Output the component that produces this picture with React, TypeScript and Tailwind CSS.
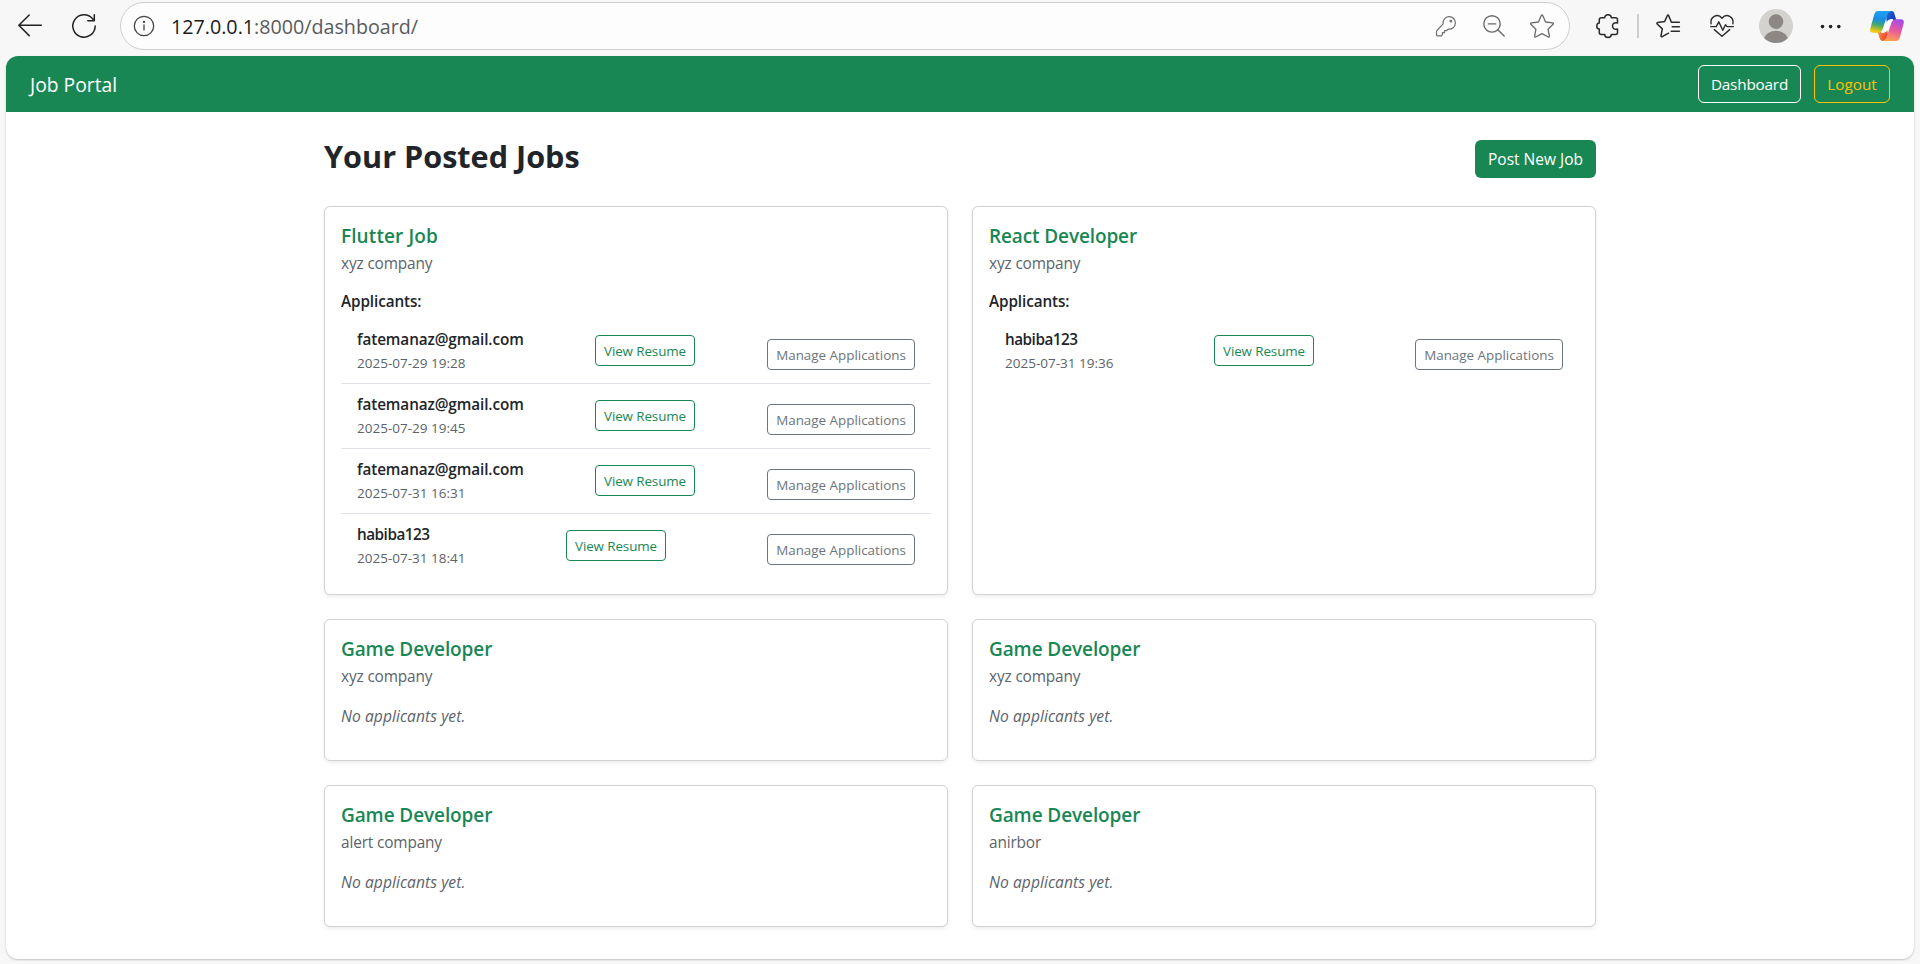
import React from "react";

type Applicant = { name: string; date: string; tracking: string };
type Job = { title: string; company: string; titleTracking: string; applicants: Applicant[] };

const EMAIL = "w-[166px] tracking-[-0.1px]";
const SHORT = "w-[108px] tracking-[-0.5px]";

const jobs: Job[] = [
  {
    title: "Flutter Job",
    company: "xyz company",
    titleTracking: "tracking-[0.1px]",
    applicants: [
      { name: "fatemanaz@gmail.com", date: "2025-07-29 19:28", tracking: EMAIL },
      { name: "fatemanaz@gmail.com", date: "2025-07-29 19:45", tracking: EMAIL },
      { name: "fatemanaz@gmail.com", date: "2025-07-31 16:31", tracking: EMAIL },
      { name: "habiba123", date: "2025-07-31 18:41", tracking: SHORT },
    ],
  },
  {
    title: "React Developer",
    company: "xyz company",
    titleTracking: "tracking-[-0.12px]",
    applicants: [{ name: "habiba123", date: "2025-07-31 19:36", tracking: SHORT }],
  },
  { title: "Game Developer", company: "xyz company", titleTracking: "tracking-[-0.1px]", applicants: [] },
  { title: "Game Developer", company: "xyz company", titleTracking: "tracking-[-0.1px]", applicants: [] },
  { title: "Game Developer", company: "alert company", titleTracking: "tracking-[-0.1px]", applicants: [] },
  { title: "Game Developer", company: "anirbor", titleTracking: "tracking-[-0.1px]", applicants: [] },
];

function Icon({ children, color = "#2b2b2b", width = 1.5, className = "" }: { children: React.ReactNode; color?: string; width?: number; className?: string }) {
  return (
    <svg
      viewBox="0 0 24 24"
      className={"size-6 shrink-0 overflow-visible " + className}
      fill="none"
      stroke={color}
      strokeWidth={width}
      strokeLinecap="round"
      strokeLinejoin="round"
    >
      {children}
    </svg>
  );
}

function Copilot() {
  return (
    <svg viewBox="0 0 102 90" className="ml-[27px] h-[30px] w-[34px] shrink-0">
      <defs>
        <linearGradient id="cpLeft" x1="0.5" y1="0" x2="0.3" y2="1">
          <stop offset="0" stopColor="#1fa2f2" />
          <stop offset="0.4" stopColor="#1b8be0" />
          <stop offset="0.65" stopColor="#45a96b" />
          <stop offset="0.95" stopColor="#f2c811" />
        </linearGradient>
        <linearGradient id="cpTop" x1="0" y1="0" x2="1" y2="0.6">
          <stop offset="0" stopColor="#1878e0" />
          <stop offset="1" stopColor="#1a2fb0" />
        </linearGradient>
        <linearGradient id="cpRight" x1="0.7" y1="0" x2="0.4" y2="1">
          <stop offset="0" stopColor="#a24be8" />
          <stop offset="0.5" stopColor="#e8589f" />
          <stop offset="1" stopColor="#ffa34a" />
        </linearGradient>
        <linearGradient id="cpBottom" x1="0" y1="0" x2="1" y2="0.4">
          <stop offset="0" stopColor="#f9a03a" />
          <stop offset="1" stopColor="#e6413c" />
        </linearGradient>
      </defs>
      <path d="M46 0h18c7 0 9 6 11 14l4 14H64c-8 0-11 5-13 12z" fill="url(#cpTop)" />
      <path d="M56 90H38c-7 0-9-6-11-14l-4-14h15c8 0 11-5 13-12z" fill="url(#cpBottom)" />
      <path d="M24 0h42c-9 1-13 9-16 18L38 54c-2 8-7 11-14 11H10C0 65-1 58 2 49l10-36C15 4 17 0 24 0z" fill="url(#cpLeft)" />
      <path d="M78 90H36c9-1 13-9 16-18l12-36c2-8 7-11 14-11h14c10 0 11 7 8 16L90 77c-3 9-5 13-12 13z" fill="url(#cpRight)" />
      <path d="M68 26c-10 0-15 3-18 11l-6 17c-2 6-5 9-9 10 10 0 15-3 18-11l6-17c2-6 5-9 9-10z" fill="#fff" stroke="#fff" strokeWidth="4" strokeLinejoin="round" />
    </svg>
  );
}

function BrowserBar() {
  return (
    <header className="flex h-14 items-center pb-1">
      <Icon className="ml-[18px]" color="#222">
        <path d="M23.3 11.3H.9M11.2 1 .8 11.3l10.400 10.300" />
      </Icon>
      <Icon className="ml-[30px]" color="#222">
        <path d="M23.200 12A11.200 11.200 0 1 1 20.600 4.800L22.300 6.600M22.300.700v6h-6.500" />
      </Icon>
      <div className="ml-6 flex h-12 w-[1450px] items-center rounded-full border border-[#cfcfcf] bg-[#fdfdfd] pr-[15px] pl-[11px]">
        <Icon color="#444" width={1.3}>
          <circle cx="12" cy="12" r="9.700" />
          <path d="M12 11v5" />
          <circle cx="12" cy="8" r="0.500" fill="#444" />
        </Icon>
        <span className="ml-[15px] pt-0.5 text-[19.7px] leading-7 text-[#5a5a5a]">
          <span className="text-[#1b1b1b]">127.0.0.1</span>:8000/dashboard/
        </span>
        <Icon className="ml-auto" color="#707070" width={1.2}>
          <path d="M9.100 9.800A6.200 6.200 0 1 1 14.300 15l-1.800 1.700h-2v2H8.400v1.900l-1 1.200H3.300c-.6 0-.8-.3-.8-.8v-3.400c0-.5.200-.8.500-1.100z" />
          <circle cx="16.900" cy="7.200" r="0.800" fill="#707070" />
        </Icon>
        <Icon className="ml-6" color="#6a6a6a" width={1.4}>
          <circle cx="10" cy="9.900" r="8.200" />
          <path d="M6.300 9.900h7.400M16 16l6.200 6.100" />
        </Icon>
        <Icon className="ml-6" color="#6a6a6a" width={1.3}>
          <path d="M11.300 1.600q.7-1.300 1.400 0l2.900 6.400 7 .9q1.400.300.500 1.400l-5 5 1.300 6.900q.1 1.300-1.100.8L12 19.600 5.700 23q-1.200.5-1.100-.8l1.300-6.900-5-5q-.9-1.100.5-1.400l7-.9z" />
        </Icon>
      </div>
      <Icon className="ml-[26px]">
        <path d="M5.300 3.700h3.400C8.700 2 10 .8 12 .8s3.300 1.200 3.300 2.900h4.200q2 0 2 2v3.200c-3.600-.8-5 1-5 3.100s1.400 3.900 5 3.100v3.400q0 2-2 2h-4.200c0 1.700-1.300 2.900-3.300 2.900s-3.300-1.200-3.300-2.900H5.300q-2 0-2-2v-3.400C1.700 15.100.8 13.900.8 12s.900-3.100 2.500-3.100V5.700q0-2 2-2z" />
      </Icon>
      <div className="ml-[17px] h-6 w-0.5 bg-[#cdcdcd]" />
      <Icon className="ml-[17px]">
        <path d="M12.600 19.200 6.200 22.700Q4.900 23.200 5 21.800L6.300 14.900 1.200 10Q.3 8.800 1.800 8.400L8.600 7.600 11.300 1.700Q12 .5 12.700 1.700L15.400 8.300H23.400M16.200 12.800H23.400M15.200 17.300H23.400" />
      </Icon>
      <Icon className="ml-[30px]" width={1.4}>
        <path d="M1.100 9.800C-.2 3.200 7.300-1.600 12 4.200 16.700-1.600 24.200 3.200 22.900 9.800M.6 12.600h5.600l2.600-4.700 4 8.400 2.700-5.500 1.600 1.800h6.300M4.300 15.600 12 22.200l7.700-6.600" />
      </Icon>
      <svg viewBox="0 0 34 34" className="ml-[25px] size-[34px] shrink-0">
        <circle cx="17" cy="17" r="17" fill="#d4d2ce" />
        <circle cx="17" cy="12.600" r="7.300" fill="#8b8784" />
        <path d="M5.200 29.200C7 24.600 11.500 21.800 17 21.800s10 2.800 11.800 7.400A17 17 0 0 1 5.200 29.200z" fill="#8b8784" />
      </svg>
      <svg viewBox="0 0 24 24" className="ml-[26px] size-6 shrink-0" fill="#222">
        <circle cx="3.500" cy="12.600" r="1.800" />
        <circle cx="11.600" cy="12.600" r="1.800" />
        <circle cx="19.800" cy="12.600" r="1.800" />
      </svg>
      <Copilot />
    </header>
  );
}

function ApplicantRow({ applicant }: { applicant: Applicant }) {
  return (
    <li className="flex items-start justify-between border-b border-[#dee2e6] px-4 py-2 last:border-b-0">
      <div className={"h-12 whitespace-nowrap " + applicant.tracking}>
        <div className="text-[15.3px] leading-6 font-semibold">{applicant.name}</div>
        <div className="text-[13.5px] leading-6 tracking-normal text-[#5c636a]">{applicant.date}</div>
      </div>
      <button className="mt-2 h-[31px] w-[100px] rounded-[4px] border border-[#198754] pt-px text-[13.4px] leading-[21px] tracking-[-0.1px] whitespace-nowrap text-[#198754]">
        View Resume
      </button>
      <button className="mt-3 h-[31px] w-[148px] rounded-[4px] border border-[#6c757d] pt-px text-[13.4px] leading-[21px] whitespace-nowrap text-[#6c757d]">
        Manage Applications
      </button>
    </li>
  );
}

function JobCard({ job }: { job: Job }) {
  return (
    <article className="rounded-[6px] border border-[#d2d2d2] bg-white p-4 pt-[17px] shadow-[0_2px_4px_rgba(0,0,0,0.075)]">
      <h2 className={"text-[19px] leading-6 font-semibold text-[#198754] " + job.titleTracking}>{job.title}</h2>
      <p className="mt-1 text-[15.4px] leading-6 tracking-[-0.15px] text-[#5c636a]">{job.company}</p>
      {job.applicants.length > 0 ? (
        <>
          <h3 className="mt-[13px] text-[15.3px] leading-6 font-semibold tracking-[-0.1px]">Applicants:</h3>
          <ul className="mt-1.5">
            {job.applicants.map((a) => (
              <ApplicantRow key={a.date} applicant={a} />
            ))}
          </ul>
        </>
      ) : (
        <p className="mt-[15px] mb-4 text-[15.6px] leading-6 tracking-[0.06px] text-[#5c636a] italic">No applicants yet.</p>
      )}
    </article>
  );
}

export default function App() {
  return (
    <div className="flex h-[964px] w-[1920px] flex-col overflow-hidden bg-[#f7f7f7] font-['Open_Sans','Noto_Sans',sans-serif] text-[#212529]">
      <BrowserBar />
      <div className="mx-1.5 h-[903px] overflow-hidden rounded-[12px] bg-white shadow-[0_1px_2px_rgba(0,0,0,0.22)]">
        <nav className="flex h-14 items-center bg-[#198754] pr-6 pl-6 text-white">
          <span className="pt-0.5 text-[19.3px] leading-[30px]">Job Portal</span>
          <button className="ml-auto h-[38px] w-[103px] rounded-[6px] border border-white text-[15.3px] leading-6 tracking-[-0.2px]">Dashboard</button>
          <button className="ml-[13px] h-[38px] w-[76px] rounded-[6px] border border-[#ffc107] text-[15.3px] leading-6 text-[#ffc107]">Logout</button>
        </nav>
        <main className="mx-auto w-[1272px] pt-6">
          <div className="flex items-start justify-between">
            <h1 className="mt-px text-[30.6px] leading-[38px] font-bold">Your Posted Jobs</h1>
            <button className="mt-1 h-[38px] w-[121px] rounded-[6px] bg-[#198754] text-[15.5px] leading-6 text-white">Post New Job</button>
          </div>
          <div className="mt-7 grid grid-cols-2 gap-6">
            {jobs.map((job, i) => (
              <JobCard key={i} job={job} />
            ))}
          </div>
        </main>
      </div>
    </div>
  );
}
